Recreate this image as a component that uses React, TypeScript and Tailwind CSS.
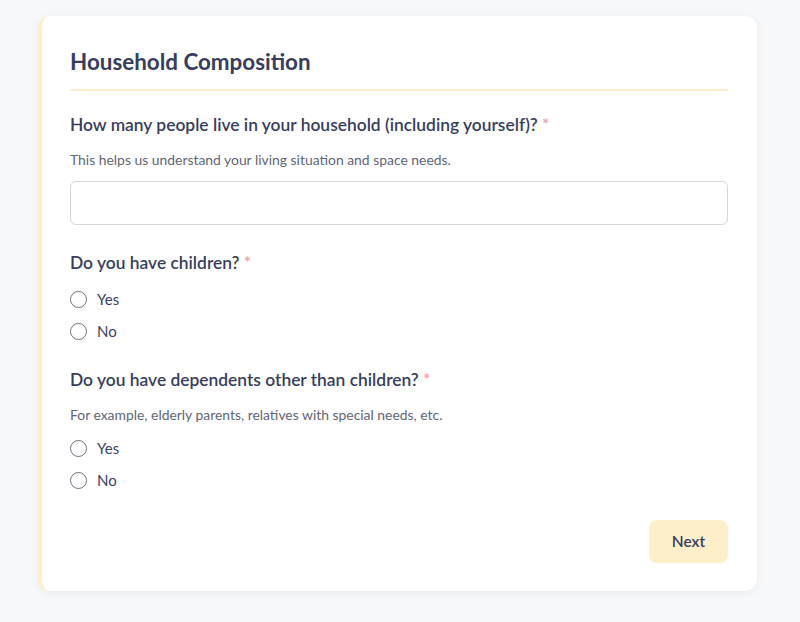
import { useState } from "react"

function Radio({ name, label, checked, onChange }: { name: string; label: string; checked: boolean; onChange: () => void }) {
  return (
    <label className="flex items-center gap-[10px] h-[32px] cursor-pointer text-[15px] text-[#3b4262]">
      <input type="radio" name={name} checked={checked} onChange={onChange} className="sr-only" />
      <span className="w-[17px] h-[17px] rounded-full border border-[#6b7280] flex items-center justify-center bg-white">
        {checked && <span className="w-[9px] h-[9px] rounded-full bg-[#3b4262]" />}
      </span>
      <span>{label}</span>
    </label>
  )
}

function Question({ text, help }: { text: string; help?: string }) {
  return (
    <div>
      <h3 className="text-[17.4px] font-semibold text-[#373e5c] leading-[24px]">
        {text} <span className="text-[#f3a7ae]">*</span>
      </h3>
      {help && <p className="mt-[14px] text-[13.9px] text-[#5f6675] leading-[18px]">{help}</p>}
    </div>
  )
}

export default function App() {
  const [count, setCount] = useState("")
  const [children, setChildren] = useState("")
  const [deps, setDeps] = useState("")

  return (
    <div className="min-h-[622px] bg-[#f7f8fa] pt-4 pl-[38px] pr-[43px] pb-8" style={{ fontFamily: "Lato, 'Noto Sans', sans-serif" }}>
      <div className="bg-white rounded-xl border-l-4 border-[#fcefc9] shadow-[0_2px_10px_rgba(0,0,0,0.05)] pl-7 pr-[29px] pt-[33px] pb-7">
        <h2 className="text-[22.4px] font-bold text-[#373e5c] leading-[26px] pb-[14px] border-b-2 border-[#fcefc9]">
          Household Composition
        </h2>

        <div className="mt-[22px]">
          <Question text="How many people live in your household (including yourself)?" help="This helps us understand your living situation and space needs." />
          <input
            type="number"
            value={count}
            onChange={(e) => setCount(e.target.value)}
            className="mt-[12px] w-full h-[44px] rounded-md border border-[#d4d7dd] px-3 text-[15px] text-[#3b4262] outline-none"
          />
        </div>

        <div className="mt-[26px]">
          <Question text="Do you have children?" />
          <div className="mt-[8px] flex flex-col">
            <Radio name="children" label="Yes" checked={children === "yes"} onChange={() => setChildren("yes")} />
            <Radio name="children" label="No" checked={children === "no"} onChange={() => setChildren("no")} />
          </div>
        </div>

        <div className="mt-[21px]">
          <Question text="Do you have dependents other than children?" help="For example, elderly parents, relatives with special needs, etc." />
          <div className="mt-[8px] flex flex-col">
            <Radio name="deps" label="Yes" checked={deps === "yes"} onChange={() => setDeps("yes")} />
            <Radio name="deps" label="No" checked={deps === "no"} onChange={() => setDeps("no")} />
          </div>
        </div>

        <div className="mt-[24px] flex justify-end">
          <button className="w-[79px] h-[43px] rounded-lg bg-[#fcefc9] text-[15.5px] font-semibold text-[#373e5c]">Next</button>
        </div>
      </div>
    </div>
  )
}
